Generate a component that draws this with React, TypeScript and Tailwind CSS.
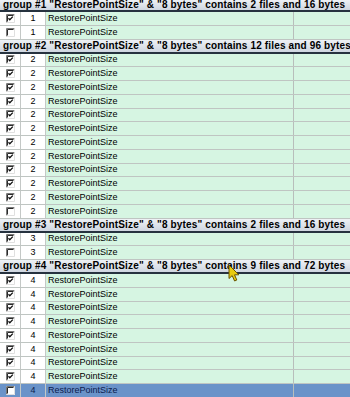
type Group = {
  n: number
  files: number
  bytes: number
  checks: boolean[]
}

const groups: Group[] = [
  { n: 1, files: 2, bytes: 16, checks: [true, false] },
  { n: 2, files: 12, bytes: 96, checks: [...Array(11).fill(true), false] },
  { n: 3, files: 2, bytes: 16, checks: [true, false] },
  { n: 4, files: 9, bytes: 72, checks: [...Array(8).fill(true), false] },
]

function CheckBox({ checked }: { checked: boolean }) {
  return (
    <svg width="9" height="9" viewBox="0 0 9 9" className="block">
      <rect x="0" y="0" width="9" height="9" fill="#ffffff" />
      <path d="M0.5 8.5V0.5H8.5" fill="none" stroke="#7a7a7a" />
      <path d="M1.5 7.5V1.5H7.5" fill="none" stroke="#2a2a2a" />
      <path d="M0.5 8.5H8.5V0.5" fill="none" stroke="#e0e0e0" />
      {checked && <path d="M2.5 4.2L3.8 5.7L6.8 2.6" fill="none" stroke="#111" strokeWidth="1.3" />}
    </svg>
  )
}

function GroupHeader({ group, first }: { group: Group; first: boolean }) {
  return (
    <div
      className={`${first ? 'h-[12px]' : 'h-[14px]'} flex items-center pl-[3px] bg-gradient-to-b from-[#eef1f5] to-[#cfd6e0] border-b-2 border-[#26323f] text-[10px] font-bold tracking-[0.15px] text-black whitespace-nowrap overflow-hidden leading-none`}
    >
      group #{group.n} "RestorePointSize" &amp; "8 bytes" contains {group.files} files and {group.bytes} bytes
    </div>
  )
}

function FileRow({ n, checked, selected }: { n: number; checked: boolean; selected: boolean }) {
  const bg = selected ? 'bg-[#6a93c9]' : 'bg-[#d6f5e2]'
  const side = selected ? 'bg-[#6a93c9]' : 'bg-white'
  return (
    <div className={`flex h-[13.75px] border-b border-[#bfc5c2] text-[9px] leading-none ${selected ? 'text-[#0c1c4e]' : 'text-black'}`}>
      <div className={`w-[21px] flex items-center pl-[6px] border-r border-[#c4c8c6] ${side}`}>
        <CheckBox checked={checked} />
      </div>
      <div className={`w-[25px] flex items-center justify-center border-r border-[#c4c8c6] ${side}`}>{n}</div>
      <div className={`w-[248px] flex items-center pl-[2px] border-r border-[#b8bebb] ${bg}`}>RestorePointSize</div>
      <div className={`flex-1 ${bg}`} />
    </div>
  )
}

function Cursor() {
  return (
    <svg width="13" height="19" viewBox="0 0 13 19" className="absolute left-[228px] top-[264px]">
      <path
        d="M1 1L1 14.5L4.2 11.6L6.6 17L8.8 16L6.5 10.8L10.8 10.8Z"
        fill="#e8cc10"
        stroke="#6a5400"
        strokeWidth="1"
        strokeLinejoin="round"
      />
    </svg>
  )
}

export default function App() {
  return (
    <div className="relative w-[350px] h-[397px] overflow-hidden bg-white font-['Liberation_Sans',Arial,sans-serif]">
      {groups.map((group, gi) => (
        <div key={group.n}>
          <GroupHeader group={group} first={gi === 0} />
          {group.checks.map((checked, i) => (
            <FileRow
              key={i}
              n={group.n}
              checked={checked}
              selected={group.n === 4 && i === group.checks.length - 1}
            />
          ))}
        </div>
      ))}
      <Cursor />
    </div>
  )
}
